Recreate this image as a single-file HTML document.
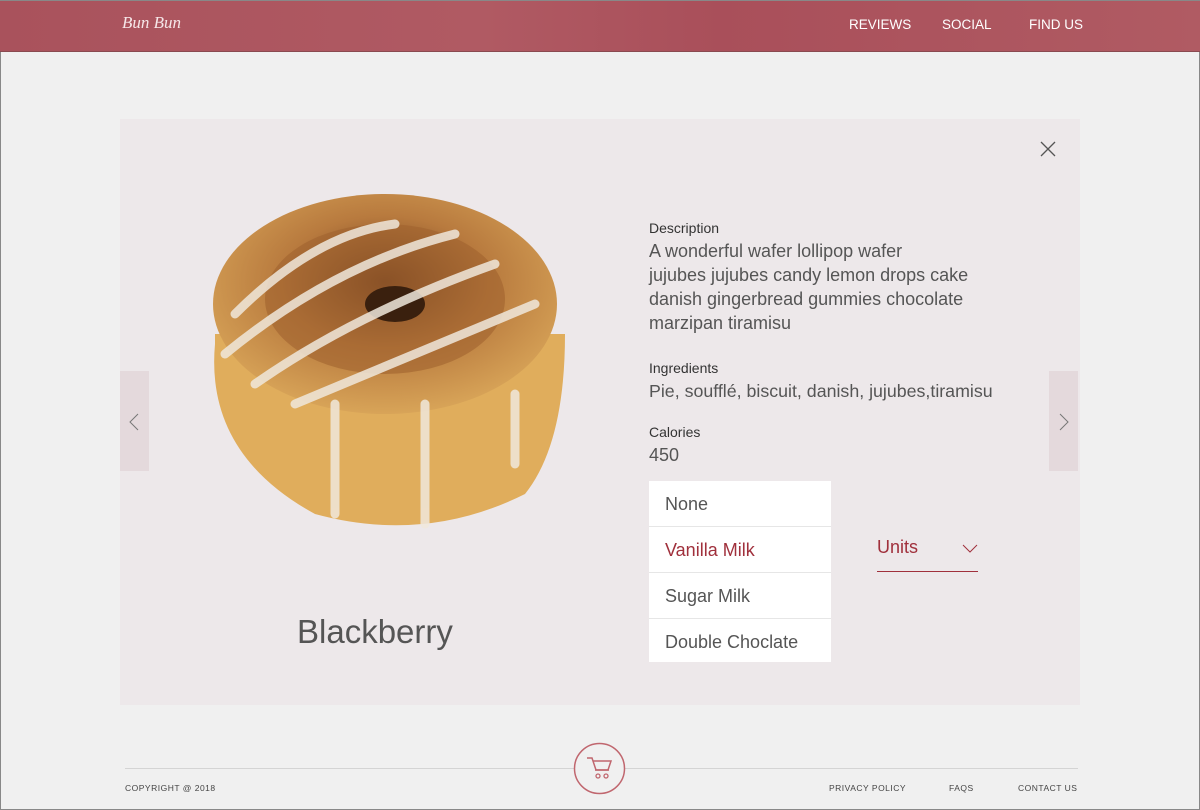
<!DOCTYPE html>
<html><head><style>
*{margin:0;padding:0;box-sizing:border-box}
body{width:1200px;height:810px;background:#f0f0f0;font-family:"Liberation Sans",sans-serif;position:relative;overflow:hidden;box-shadow:inset 0 0 0 1px #888}
.hdr{position:absolute;left:0;top:0;width:1200px;height:52px;background:linear-gradient(90deg,#a9525c,#b05a63 40%,#a94f5a 60%,#b05b63);border-top:1px solid #888;border-bottom:1px solid #8a4a50}
.nav{position:absolute;top:16px;color:#fff;font-size:13.5px}
.card{position:absolute;left:120px;top:119px;width:960px;height:586px;background:#ede8ea}
.arr{position:absolute;top:252px;width:29px;height:100px;background:#e4d9dc}
.t{position:absolute;color:#444}
.lbl{font-size:14px;color:#333}
.val{font-size:18px;color:#555;line-height:24px}
.dd{position:absolute;left:529px;top:362px;width:182px;height:181px;background:#fff}
.dd div{height:46px;border-bottom:1px solid #e6e6e6;padding:13px 16px;font-size:18px;color:#555}
.ft{position:absolute;top:783px;font-size:8.5px;color:#444;letter-spacing:.5px}
</style></head><body>
<div class="hdr">
<div style="position:absolute;left:122px;top:12px;color:#f6e6e8;font-family:'Liberation Serif',serif;font-style:italic;font-size:17px">Bun Bun</div>
<div class="nav" style="left:849px">REVIEWS</div>
<div class="nav" style="left:942px">SOCIAL</div>
<div class="nav" style="left:1029px">FIND US</div>
</div>
<div class="card">
<svg style="position:absolute;left:920px;top:22px" width="16" height="16"><path d="M1 1L15 15M15 1L1 15" stroke="#555" stroke-width="1.3"/></svg>
<div class="arr" style="left:0"><svg style="position:absolute;left:9px;top:42px" width="10" height="18"><path d="M9 1L1 9L9 17" stroke="#777" fill="none"/></svg></div>
<div class="arr" style="left:929px"><svg style="position:absolute;left:10px;top:42px" width="10" height="18"><path d="M1 1L9 9L1 17" stroke="#777" fill="none"/></svg></div>
<svg style="position:absolute;left:75px;top:75px" width="375" height="345">
<defs><radialGradient id="g" cx="50%" cy="40%" r="60%"><stop offset="0" stop-color="#6a3a1c"/><stop offset=".5" stop-color="#b87a3e"/><stop offset="1" stop-color="#d8a458"/></radialGradient></defs>
<path d="M20 150 Q10 260 120 320 Q230 350 330 300 Q370 250 370 140 L20 140Z" fill="#e0ad5c"/>
<ellipse cx="190" cy="110" rx="172" ry="110" fill="url(#g)"/>
<ellipse cx="190" cy="105" rx="120" ry="75" fill="#a0622e" opacity=".6"/>
<ellipse cx="200" cy="110" rx="30" ry="18" fill="#3a200e"/>
<g stroke="#f0e8dc" stroke-width="9" fill="none" stroke-linecap="round" opacity=".85">
<path d="M40 120 Q120 40 200 30"/><path d="M30 160 Q140 70 260 40"/><path d="M60 190 Q160 120 300 70"/><path d="M100 210 Q220 160 340 110"/><path d="M230 210 L230 330"/><path d="M320 200 L320 270"/><path d="M140 210 L140 320"/>
</g></svg>
<div class="t" style="left:177px;top:494px;font-size:33px;color:#555">Blackberry</div>
<div class="t lbl" style="left:529px;top:101px">Description</div>
<div class="t val" style="left:529px;top:120px;width:340px">A wonderful wafer lollipop wafer<br>jujubes jujubes candy lemon drops cake<br>danish gingerbread gummies chocolate<br>marzipan tiramisu</div>
<div class="t lbl" style="left:529px;top:241px">Ingredients</div>
<div class="t val" style="left:529px;top:260px;font-size:17.8px">Pie, soufflé, biscuit, danish, jujubes,tiramisu</div>
<div class="t lbl" style="left:529px;top:305px">Calories</div>
<div class="t val" style="left:529px;top:324px">450</div>
<div class="dd"><div>None</div><div style="color:#a0303c">Vanilla Milk</div><div>Sugar Milk</div><div style="border:0">Double Choclate</div></div>
<div class="t" style="left:757px;top:418px;font-size:18px;color:#a0303c">Units</div>
<svg style="position:absolute;left:842px;top:425px" width="16" height="10"><path d="M1 1L8 8L15 1" stroke="#a0303c" fill="none"/></svg>
<div style="position:absolute;left:757px;top:452px;width:101px;height:1px;background:#a0303c"></div>
</div>
<div style="position:absolute;left:125px;top:768px;width:953px;height:1px;background:#d4d4d4"></div>
<svg style="position:absolute;left:573px;top:742px" width="53" height="53"><circle cx="26.5" cy="26.5" r="25" fill="#f0f0f0" stroke="#c0666e" stroke-width="1.5"/><path d="M14 16h5l4 12h12l3-9H20" stroke="#c0666e" fill="none" stroke-width="1.5"/><path d="M22 28h14" stroke="#c0666e" stroke-width="1.5"/><circle cx="25" cy="34" r="2" stroke="#c0666e" fill="none" stroke-width="1.3"/><circle cx="33" cy="34" r="2" stroke="#c0666e" fill="none" stroke-width="1.3"/></svg>
<div class="ft" style="left:125px">COPYRIGHT @ 2018</div>
<div class="ft" style="left:829px">PRIVACY POLICY</div>
<div class="ft" style="left:949px">FAQS</div>
<div class="ft" style="left:1018px">CONTACT US</div>
</body></html>
